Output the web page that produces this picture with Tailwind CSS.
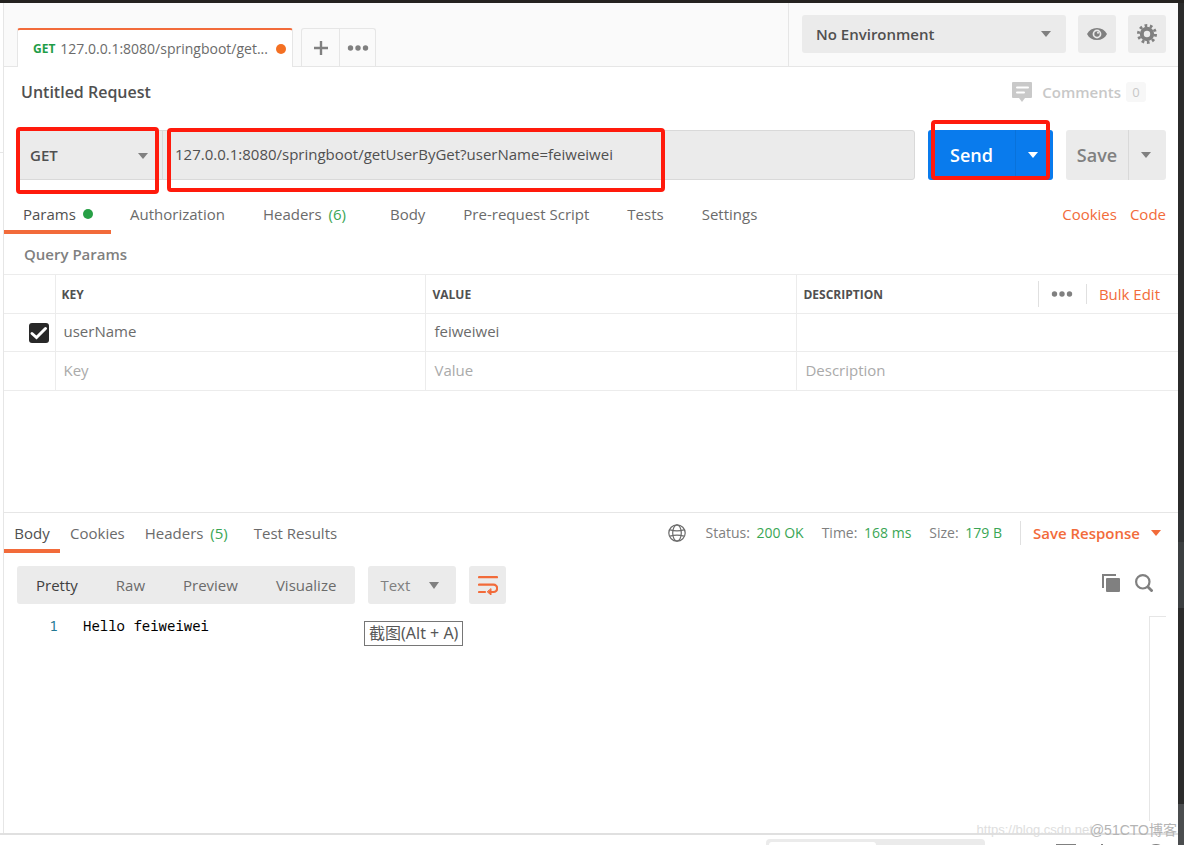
<!DOCTYPE html>
<html lang="en">
<head>
<meta charset="utf-8">
<meta name="viewport" content="width=device-width, initial-scale=1">
<title>Untitled Request</title>
<script src="https://cdn.jsdelivr.net/npm/@tailwindcss/browser@4"></script>
</head>
<body class="flex h-screen flex-col overflow-hidden border-t-3 border-[#242220] bg-white font-['Open_Sans','Noto_Sans_CJK_SC',sans-serif] text-[15px] leading-5 text-[#6b6b6b]">
<div class="relative flex min-h-0 flex-1">
  <!-- edge of the collapsed sidebar -->
  <aside class="flex w-1 shrink-0 flex-col border-r border-[#e6e6e6]"><div class="h-[150px] border-b border-[#e6e6e6]"></div></aside>

  <div class="flex min-w-0 flex-1 flex-col">
    <main class="flex min-h-0 flex-1 flex-col">
      <header class="flex h-16 shrink-0 bg-[#fafafa]">
        <div class="flex flex-1 items-end">
          <div class="h-full w-[13px] border-b border-[#e6e6e6]"></div>
          <a href="#" class="flex h-[39px] w-[276px] items-center gap-[5px] rounded-t-[3px] border-x border-t-2 border-x-[#e6e6e6] border-t-[#f26b3a] bg-white pr-[6px] pl-[15px] text-sm">
            <span class="text-xs font-bold text-[#1f9d48]">GET</span>
            <span class="flex-1 whitespace-nowrap">127.0.0.1:8080/springboot/get...</span>
            <span class="size-[10px] rounded-full bg-[#f47023]"></span>
          </a>
          <div class="flex h-full flex-1 items-end border-b border-[#e6e6e6] pl-2">
            <div class="flex h-[38px] rounded-t-[3px] border border-b-0 border-[#e6e6e6]">
              <button aria-label="New tab" class="flex w-[38px] items-center justify-center border-r border-[#e6e6e6]"><svg class="size-4" viewBox="0 0 16 16" stroke="#808080" stroke-width="2.400"><path d="M8 1v14M1 8h14"/></svg></button>
              <button aria-label="Tab options" class="flex w-[35px] items-center justify-center"><svg class="h-[6px] w-[22px]" viewBox="0 0 22 6" fill="#808080"><circle cx="3.500" cy="3" r="2.700"/><circle cx="11" cy="3" r="2.700"/><circle cx="18.500" cy="3" r="2.700"/></svg></button>
            </div>
          </div>
        </div>
        <div class="flex gap-3 border-b border-l border-[#e6e6e6] pt-3 pr-3 pl-[13px]">
          <div class="relative h-[38px] w-[264px]">
            <select aria-label="Environment" class="size-full appearance-none rounded-[3px] bg-[#ebebeb] px-[14px] font-semibold text-[#505050]"><option>No Environment</option></select>
            <svg class="pointer-events-none absolute top-4 right-[15px] h-[6px] w-[10px]" viewBox="0 0 10 6" fill="#808080"><path d="M0 0h10L5 6z"/></svg>
          </div>
          <button aria-label="Environment quick look" class="flex h-[38px] w-[38px] items-center justify-center rounded-[3px] bg-[#ebebeb]">
            <svg class="h-[14px] w-[20px]" viewBox="0 0 20 14"><path fill="#808080" fill-rule="evenodd" d="M0 7C2 3 5.500 1 10 1s8 2 10 6c-2 4-5.500 6-10 6S2 11 0 7zM10 2.600a4.400 4.400 0 1 0 0 8.800 4.400 4.400 0 0 0 0-8.800z"/><circle cx="10" cy="7" r="2.700" fill="#808080"/><circle cx="11" cy="5.800" r="1" fill="#ebebeb"/></svg>
          </button>
          <button aria-label="Settings" class="flex h-[38px] w-[38px] items-center justify-center rounded-[3px] bg-[#ebebeb]">
            <svg class="size-5" viewBox="0 0 20 20" fill="none" stroke="#808080"><circle cx="10" cy="10" r="5.200" stroke-width="4"/><circle cx="10" cy="10" r="8.500" stroke-width="3" stroke-dasharray="2.670 2.670"/></svg>
          </button>
        </div>
      </header>

      <div class="flex h-[63px] shrink-0 items-start justify-between pt-[15px] pr-8 pl-[17px]">
        <h1 class="text-base leading-5 font-semibold text-[#505050]">Untitled Request</h1>
        <button class="flex items-center font-semibold text-[#c8c8c8]">
          <svg class="h-5 w-5" viewBox="0 0 20 20"><path fill="#c9c9c9" d="M1 0h18q1 0 1 1v14q0 1-1 1h-6l-3 4-3-4H1q-1 0-1-1V1q0-1 1-1z"/><path stroke="#fff" stroke-width="2" stroke-linecap="round" d="M5 5.500h11M5 10.500h7"/></svg>
          <span class="ml-[10px]">Comments</span>
          <span class="ml-[5px] w-5 rounded-[3px] bg-[#f7f7f7] text-center text-[13px] font-normal">0</span>
        </button>
      </div>

      <form class="flex h-[50px] shrink-0 gap-[13px] pr-3 pl-[13px]">
        <div class="flex flex-1 rounded-[3px] border border-[#d9d9d9] bg-[#ebebeb]">
          <div class="relative w-[145px] border-r border-[#d9d9d9]">
            <select aria-label="Method" class="size-full appearance-none px-3 text-[15px] font-semibold text-[#505050]"><option>GET</option></select>
            <svg class="pointer-events-none absolute top-[22px] right-[14px] h-[6px] w-[10px]" viewBox="0 0 10 6" fill="#808080"><path d="M0 0h10L5 6z"/></svg>
            <span class="pointer-events-none absolute -top-1 -left-[2px] h-[67px] w-[143px] rounded-[4px] border-4 border-[#ff1a0c]"></span>
          </div>
          <div class="relative flex-1">
            <input aria-label="Request URL" class="size-full px-3 pb-[2px] text-[#505050] outline-none" value="127.0.0.1:8080/springboot/getUserByGet?userName=feiweiwei">
            <span class="pointer-events-none absolute -top-[3px] left-1 h-[64px] w-[498px] rounded-[4px] border-4 border-[#ff1a0c]"></span>
          </div>
        </div>
        <div class="relative flex w-[125px] rounded-[3px] bg-[#097bed] text-lg font-semibold text-white">
          <button type="button" class="flex-1 border-r border-[#0872db]">Send</button>
          <button type="button" aria-label="Send options" class="flex w-[37px] items-center justify-center pr-1"><svg class="h-[6px] w-[10px]" viewBox="0 0 10 6" fill="#fff"><path d="M0 0h10L5 6z"/></svg></button>
          <span class="pointer-events-none absolute -top-[10px] left-[3px] h-[60px] w-[119px] rounded-[4px] border-4 border-[#ff1a0c]"></span>
        </div>
        <div class="flex w-[100px] rounded-[3px] bg-[#ebebeb] text-lg font-semibold text-[#808080]">
          <button type="button" class="flex-1 border-r border-[#d9d9d9]">Save</button>
          <button type="button" aria-label="Save options" class="flex w-[37px] items-center justify-center pr-1"><svg class="h-[6px] w-[10px]" viewBox="0 0 10 6" fill="#808080"><path d="M0 0h10L5 6z"/></svg></button>
        </div>
      </form>

      <nav class="flex h-[54px] shrink-0 pr-3">
        <a href="#" class="flex w-[107px] items-start gap-[7px] border-b-4 border-[#f26b3a] pt-6 pl-[19px] text-[#505050]">Params <span class="mt-[5px] size-[10px] rounded-full bg-[#27a046]"></span></a>
        <div class="flex flex-1 items-start gap-[38px] pt-6 pl-[19px]">
          <a href="#">Authorization</a>
          <a href="#">Headers <span class="ml-[3px] text-[#3aa655]">(6)</span></a>
          <a href="#" class="ml-[6px]">Body</a>
          <a href="#">Pre-request Script</a>
          <a href="#">Tests</a>
          <a href="#">Settings</a>
        </div>
        <div class="flex items-start gap-[13px] pt-6 text-[#f26b3a]"><a href="#">Cookies</a><a href="#">Code</a></div>
      </nav>

      <h2 class="h-10 shrink-0 pt-[10px] pl-5 font-semibold text-[#808080]">Query Params</h2>

      <table class="w-full shrink-0 table-fixed border-collapse text-left">
        <colgroup><col class="w-[51px]"><col class="w-[31.6%]"><col class="w-[31.6%]"><col></colgroup>
        <thead class="text-xs leading-5 font-bold text-[#505050]">
          <tr class="h-[39px] border-y border-[#ececec]">
            <th class="border-r border-[#ececec]"></th>
            <th class="border-r border-[#ececec] px-[6px] pt-[2px]">KEY</th>
            <th class="border-r border-[#ececec] px-[6px] pt-[2px]">VALUE</th>
            <th class="pr-[18px] pl-[6px]">
              <div class="flex items-center justify-between"><span class="pt-[2px]">DESCRIPTION</span>
                <div class="flex items-center">
                  <button aria-label="Column options" class="flex h-[26px] w-12 items-center justify-center border-l border-[#e0e0e0]"><svg class="h-[6px] w-[22px]" viewBox="0 0 22 6" fill="#808080"><circle cx="3.500" cy="3" r="2.700"/><circle cx="11" cy="3" r="2.700"/><circle cx="18.500" cy="3" r="2.700"/></svg></button>
                  <a href="#" class="border-l border-[#e0e0e0] pl-3 text-[15px] font-normal text-[#f26b3a]">Bulk Edit</a>
                </div>
              </div>
            </th>
          </tr>
        </thead>
        <tbody>
          <tr class="h-[38px] border-b border-[#ececec]">
            <td class="border-r border-[#ececec]">
              <label class="relative ml-[25px] block size-5"><input type="checkbox" checked aria-label="Enable userName" class="block size-5 appearance-none rounded-[3px] bg-[#282828]">
              <svg class="pointer-events-none absolute inset-0 size-5" viewBox="0 0 20 20" fill="none" stroke="#fff" stroke-width="3"><path d="M3 10.500l4.500 4L16.500 5.500" stroke-linecap="round"/></svg></label>
            </td>
            <td class="border-r border-[#ececec] px-2 pb-[3px]"><input aria-label="Key" class="block w-full" value="userName"></td>
            <td class="border-r border-[#ececec] px-2 pb-[3px]"><input aria-label="Value" class="block w-full" value="feiweiwei"></td>
            <td class="px-2 pb-[3px]"><input aria-label="Description" class="block w-full"></td>
          </tr>
          <tr class="h-[39px] border-b border-[#ececec]">
            <td class="border-r border-[#ececec]"></td>
            <td class="border-r border-[#ececec] px-2 pb-[3px]"><input aria-label="New key" placeholder="Key" class="block w-full placeholder:text-[#aaaaaa]"></td>
            <td class="border-r border-[#ececec] px-2 pb-[3px]"><input aria-label="New value" placeholder="Value" class="block w-full placeholder:text-[#aaaaaa]"></td>
            <td class="px-2 pb-[3px]"><input aria-label="New description" placeholder="Description" class="block w-full placeholder:text-[#aaaaaa]"></td>
          </tr>
        </tbody>
      </table>

      <section class="mt-auto flex h-[321px] shrink-0 flex-col border-t border-[#e6e6e6]">
        <div class="flex h-10 shrink-0 items-stretch">
          <a href="#" class="w-14 border-b-4 border-[#f26b3a] pt-[10px] text-center text-[#505050]">Body</a>
          <div class="flex flex-1 items-start gap-5 pt-[10px] pl-[10px]">
            <a href="#">Cookies</a>
            <a href="#">Headers <span class="ml-[3px] text-[#3aa655]">(5)</span></a>
            <a href="#" class="ml-[6px]">Test Results</a>
          </div>
          <div class="flex items-start gap-[18px] pt-[10px] text-sm leading-5 text-[#808080]">
            <svg class="mt-px mr-[2px] size-[18px]" viewBox="0 0 18 18" fill="none" stroke="#6b6b6b" stroke-width="1.200"><circle cx="9" cy="9" r="8.200"/><ellipse cx="9" cy="9" rx="4.300" ry="8.200"/><path d="M2 5.800q7 2 14 0M2 12.200q7-2 14 0"/></svg>
            <span>Status: <span class="ml-[3px] text-[#3aa655]">200 OK</span></span>
            <span>Time: <span class="ml-[3px] text-[#3aa655]">168 ms</span></span>
            <span>Size: <span class="ml-[3px] text-[#3aa655]">179 B</span></span>
          </div>
          <button class="mt-2 mr-[17px] ml-[18px] flex h-6 items-center gap-[11px] border-l border-[#e0e0e0] pl-3 font-semibold text-[#f26b3a]">Save Response <svg class="h-[6px] w-[10px]" viewBox="0 0 10 6" fill="#f26b3a"><path d="M0 0h10L5 6z"/></svg></button>
        </div>
        <div class="mt-[13px] flex h-[38px] shrink-0 items-stretch gap-[13px] pr-[25px] pl-[13px]">
          <div class="flex gap-[38px] rounded-[3px] bg-[#ebebeb] px-[19px]">
            <button class="text-[#404040]">Pretty</button><button>Raw</button><button>Preview</button><button>Visualize</button>
          </div>
          <div class="relative w-[88px]">
            <select aria-label="Format" class="size-full appearance-none rounded-[3px] bg-[#ebebeb] px-3 text-[#808080]"><option>Text</option></select>
            <svg class="pointer-events-none absolute top-4 right-[17px] h-[7px] w-[10px]" viewBox="0 0 10 6" preserveAspectRatio="none" fill="#808080"><path d="M0 0h10L5 6z"/></svg>
          </div>
          <button aria-label="Wrap lines" class="flex w-[37px] items-center justify-center rounded-[3px] bg-[#ebebeb]">
            <svg class="h-5 w-5" viewBox="0 0 20 20" fill="none" stroke="#f26b3a" stroke-width="2.200" stroke-linecap="round"><path d="M1 2.200h18M1 9.700h14.500a3.600 3.600 0 0 1 0 7.300H12M1 17h6"/><path fill="#f26b3a" stroke-width="1" stroke-linejoin="round" d="M13 14v6l-3.500-3z"/></svg>
          </button>
          <div class="ml-auto flex items-start gap-[15px] pt-2">
            <button aria-label="Copy"><svg class="size-[18px]" viewBox="0 0 18 18" fill="#808080"><path d="M0 0h14v2H2v12H0z"/><rect x="4" y="4" width="14" height="14" rx="1"/></svg></button>
            <button aria-label="Search"><svg class="size-[18px]" viewBox="0 0 18 18" fill="none" stroke="#808080"><circle cx="7.800" cy="7.800" r="6.700" stroke-width="2.200"/><path d="M12.500 12.500l5 5" stroke-width="2.800"/></svg></button>
          </div>
        </div>
        <div class="flex min-h-0 flex-1 pt-3 pr-3 pb-3">
          <div class="relative flex flex-1 font-['Noto_Sans_Mono','DejaVu_Sans_Mono',monospace] text-sm leading-5">
            <span class="w-[54px] text-right text-[#237893]">1</span>
            <code class="pl-[25px] font-['Noto_Sans_Mono','DejaVu_Sans_Mono',monospace] text-black">Hello feiweiwei</code>
            <div role="tooltip" class="absolute top-[5px] left-[360px] border border-[#767676] bg-white px-1 font-['Noto_Sans','Noto_Sans_CJK_SC',sans-serif] text-base leading-[23px] whitespace-nowrap text-[#575757]">截图(Alt + A)</div>
          </div>
          <div class="w-[17px] border-t border-l border-[#e6e6e6]"></div>
        </div>
      </section>
    </main>
  </div>

  <!-- desktop behind the window -->
  <div class="flex w-[6px] shrink-0 flex-col bg-[#2b2b2b]"><div class="mt-[507px] h-8 bg-[#313335]"></div><div class="h-[66px] bg-[#3c3f41]"></div><div class="mt-auto h-[29px] bg-[#4b4d4f]"></div></div>

  <div class="pointer-events-none absolute right-[7px] -bottom-[7px] flex items-center font-['Liberation_Sans','Noto_Sans_CJK_SC',sans-serif] text-sm leading-5"><span class="-mr-[3px] text-[13px] text-[#dedede]">https://blog.csdn.net</span><span class="text-[#b4b4b4]">@51CTO博客</span></div>
</div>

<footer class="flex h-3 shrink-0 overflow-hidden">
  <div class="flex flex-1 items-start border-t-2 border-[#e0e0e0]">
    <div class="mt-1 mr-[71px] ml-auto flex h-7 w-[219px] rounded-[4px] bg-[#ebebeb] p-[3px]"><button aria-label="Build" class="w-[107px] rounded-[3px] bg-white"></button><button aria-label="Browse" class="flex-1"></button></div>
    <div class="mt-[9px] mr-3 flex gap-[25px]">
      <button aria-label="Two pane view" class="h-4 w-5 border-2 border-[#808080]"></button>
      <button aria-label="Shortcuts" class="h-4 w-[2px] bg-[#808080]"></button>
      <button aria-label="Help" class="ml-[18px] size-5 rounded-full border-2 border-[#808080]"></button>
    </div>
  </div>
  <div class="w-[6px] bg-[#4b4d4f]"></div>
</footer>
</body>
</html>
